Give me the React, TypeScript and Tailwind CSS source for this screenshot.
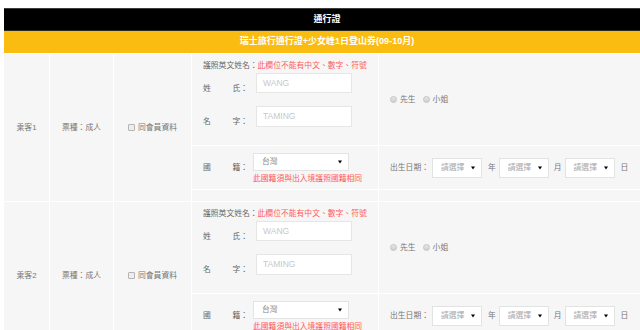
import React from "react";

const Arrow = () => (
  <span className="absolute right-[6px] top-1/2 -translate-y-1/2 w-0 h-0 border-l-[2.5px] border-r-[2.5px] border-t-[3.5px] border-l-transparent border-r-transparent border-t-black" />
);

function Sel({ text, cls }: { text: string; cls: string }) {
  return (
    <div className={`relative bg-white border border-[#e3e3e3] flex items-center ${cls}`}>
      <span>{text}</span>
      <Arrow />
    </div>
  );
}

function Radio({ label }: { label: string }) {
  return (
    <div className="flex items-center gap-[3px]">
      <span className="w-[7px] h-[7px] rounded-full border border-[#c4c4c4] bg-gradient-to-b from-[#e6e6e6] to-[#cfcfcf]" />
      <span>{label}</span>
    </div>
  );
}

function Passenger({ n }: { n: number }) {
  const cell = "bg-[#f6f6f6]";
  return (
    <div className="grid grid-cols-[45px_63px_77px_186px_271px] grid-rows-[91px_43px_11px] gap-px">
      <div className={`${cell} row-span-3 flex items-center justify-center`}>乘客{n}</div>
      <div className={`${cell} row-span-3 flex items-center justify-center`}>票種：成人</div>
      <div className={`${cell} row-span-3 flex items-center justify-center gap-[3px]`}>
        <span className="w-[7px] h-[7px] border border-[#b5b5b5] bg-[#ededed] rounded-[1px]" />
        <span>同會員資料</span>
      </div>
      <div className={`${cell} pl-[11px] pt-[6px] flex flex-col`}>
        <div className="leading-[12px] text-[#666]">
          護照英文姓名：<span className="text-[#ff5a5a]">此欄位不能有中文、數字、符號</span>
        </div>
        <div className="flex items-start mt-[1px]">
          <div className="w-[45px] mt-[10px] leading-[12px] flex justify-between text-[#666]">
            <span>姓</span>
            <span>氏：</span>
          </div>
          <div className="ml-[8px] w-[96px] h-[20px] bg-white border border-[#e6e6e6] flex items-center pl-[6px] text-[#c8c8c8] text-[8.5px]">
            WANG
          </div>
        </div>
        <div className="flex items-start mt-[11px]">
          <div className="w-[45px] mt-[10px] leading-[12px] flex justify-between text-[#666]">
            <span>名</span>
            <span>字：</span>
          </div>
          <div className="ml-[8px] w-[96px] h-[21px] bg-white border border-[#e6e6e6] flex items-center pl-[6px] text-[#c8c8c8] text-[8.5px]">
            TAMING
          </div>
        </div>
      </div>
      <div className={`${cell} pl-[11px] flex items-center gap-[7px]`}>
        <Radio label="先生" />
        <Radio label="小姐" />
      </div>
      <div className={`${cell} pl-[11px] flex items-center`}>
        <div className="w-[45px] leading-[12px] flex justify-between text-[#666]">
          <span>國</span>
          <span>籍：</span>
        </div>
        <div className="ml-[5px] flex flex-col pt-[2px]">
          <Sel text="台灣" cls="w-[96px] h-[18px] pl-[8px] text-[#888]" />
          <div className="mt-[2px] leading-[12px] text-[#ff5a5a]">此國籍須與出入境護照國籍相同</div>
        </div>
      </div>
      <div className={`${cell} pl-[11px] flex items-center`}>
        <span>出生日期：</span>
        <Sel text="請選擇" cls="ml-[3px] w-[50px] h-[20px] pl-[8px] text-[#aaa]" />
        <span className="ml-[6px] mr-[3px]">年</span>
        <Sel text="請選擇" cls="w-[50px] h-[20px] pl-[8px] text-[#aaa]" />
        <span className="ml-[5px] mr-[3px]">月</span>
        <Sel text="請選擇" cls="w-[50px] h-[20px] pl-[8px] text-[#aaa]" />
        <span className="ml-[6px]">日</span>
      </div>
      <div className={cell} />
      <div className={cell} />
    </div>
  );
}

export default function App() {
  return (
    <div className="w-[640px] h-[330px] overflow-hidden bg-white pt-[8px] pl-[4px] font-['Liberation_Sans','Noto_Sans_CJK_TC',sans-serif] text-[7.8px] text-[#777]">
      <div className="w-[646px] flex flex-col gap-px bg-white">
        <div className="flex flex-col">
          <div className="h-[23px] bg-black border-t border-[#3c3c3c] border-b border-b-[#2a2a20] flex items-center justify-center text-white font-bold text-[9px]">
            通行證
          </div>
          <div className="h-[22px] bg-[#fbbc12] flex items-center justify-center text-white font-bold text-[9px]">
            瑞士旅行通行證+少女峰1日登山券(09-10月)
          </div>
        </div>
        <Passenger n={1} />
        <Passenger n={2} />
      </div>
    </div>
  );
}
